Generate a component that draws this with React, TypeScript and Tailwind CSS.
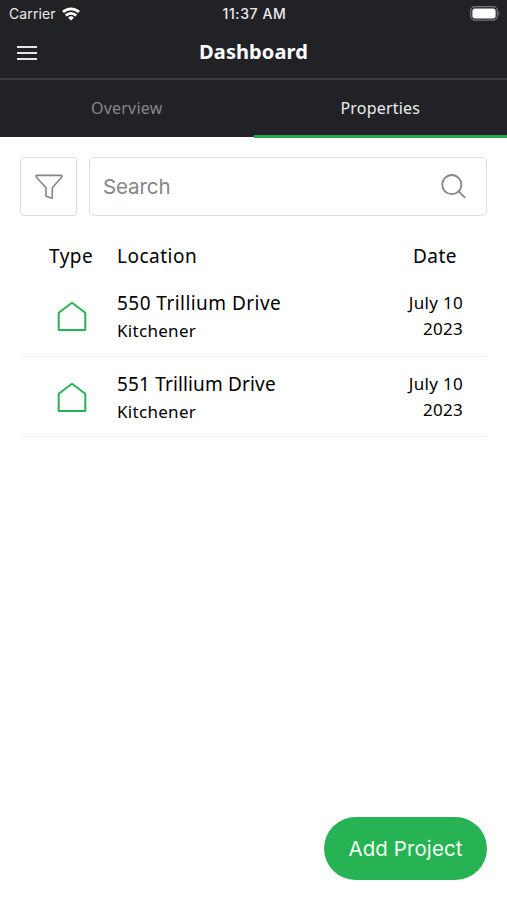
interface Property {
  id: number
  address: string
  city: string
  day: string
  year: string
}

const properties: Property[] = [
  { id: 1, address: '550 Trillium Drive', city: 'Kitchener', day: 'July 10', year: '2023' },
  { id: 2, address: '551 Trillium Drive', city: 'Kitchener', day: 'July 10', year: '2023' },
]

function StatusBar() {
  return (
    <div className="grid h-[27px] grid-cols-3 items-center pl-[9px] pr-[7px] font-[Inter,sans-serif] leading-none text-[#ececec]">
      <div className="flex items-center gap-[6px]">
        <span className="text-[14px] tracking-[0.1px]">Carrier</span>
        <svg width="18" height="14" viewBox="0 0 18 14" fill="none" stroke="#fff" strokeWidth="2.8">
          <path d="M1 5a11.6 11.6 0 0 1 16 0" />
          <path d="M3.8 8.6a7.4 7.4 0 0 1 10.4 0" />
          <path d="M9 13.6 6.1 10.7a4.2 4.2 0 0 1 5.8 0Z" fill="#fff" stroke="none" />
        </svg>
      </div>
      <span className="mt-px whitespace-nowrap text-center text-[14px] font-medium tracking-[0.6px]">11:37 AM</span>
      <div className="flex justify-end">
        <svg width="30" height="15" viewBox="0 0 30 15" fill="none">
          <rect x="0.7" y="0.7" width="26.6" height="13.4" rx="4" stroke="#77787b" strokeWidth="1.2" />
          <rect x="2.4" y="2.4" width="23.2" height="10" rx="2.5" fill="#fff" />
          <path d="M28.4 5.2c1.6.7 1.6 3.9 0 4.6Z" fill="#77787b" />
        </svg>
      </div>
    </div>
  )
}

function HouseIcon() {
  return (
    <svg width="30" height="31" viewBox="0 0 30 31" fill="none" stroke="#27b355" strokeWidth="2" strokeLinejoin="round">
      <path d="M15 1.8 28.3 11.8V29H1.7V11.8Z" />
    </svg>
  )
}

function PropertyRow({ property }: { property: Property }) {
  return (
    <div className="group flex h-[80px] border-b border-[#f0f0f0] last:pt-px">
      <div className="w-[97px] pl-[37px] pt-[24px]">
        <HouseIcon />
      </div>
      <div className="flex-1">
        <p className="mt-[13px] text-[19px] leading-[26px] tracking-[0.45px] group-last:tracking-[0.15px]">{property.address}</p>
        <p className="mt-[2px] text-[17px] leading-[26px] tracking-[0.3px]">{property.city}</p>
      </div>
      <div className="pr-[24px] pt-[13px] text-right text-[17px] leading-[26px] tracking-[0.3px]">
        <p>{property.day}</p>
        <p>{property.year}</p>
      </div>
    </div>
  )
}

export default function App() {
  return (
    <div className="flex h-[900px] w-[507px] flex-col overflow-hidden bg-white font-['Noto_Sans',sans-serif] text-black">
      <header className="h-[137px] bg-[#212226]">
        <StatusBar />
        <div className="grid h-[53px] grid-cols-[1fr_auto_1fr] items-start border-b-2 border-[#3d3e42] pt-[11px]">
          <button className="ml-[17px] mt-[8px] flex w-[20px] flex-col gap-[4px]" aria-label="Menu">
            <span className="h-[2px] w-full bg-[#e4e4e4]" />
            <span className="h-[2px] w-full bg-[#e4e4e4]" />
            <span className="h-[2px] w-full bg-[#e4e4e4]" />
          </button>
          <h1 className="text-[20px] font-bold leading-[28px] tracking-[0.1px] text-white">Dashboard</h1>
        </div>
        <nav className="grid h-[57px] grid-cols-2 text-center text-[16px] leading-[56px] tracking-[0.2px]">
          <span className="text-[#85868a]">Overview</span>
          <span className="h-[58px] border-b-[3px] border-[#27a64f] text-[#ededee]">Properties</span>
        </nav>
      </header>

      <main className="flex-1 px-[20px] pt-[20px]">
        <div className="flex h-[59px] gap-[12px]">
          <button className="flex w-[57px] items-center justify-center rounded-[3px] border-[1.5px] border-[#dfdfdf]" aria-label="Filter">
            <svg width="28" height="26" viewBox="0 0 28 26" fill="none" stroke="#858585" strokeWidth="1.6" strokeLinejoin="round">
              <path d="M1.2 1.4H26.8V3L17.3 13.8V24.2L11 22.2V13.8L1.2 3Z" />
            </svg>
          </button>
          <div className="flex flex-1 items-center justify-between rounded-[6px] border-[1.5px] border-[#dfdfdf] pl-[13px] pr-[20px]">
            <span className="pt-[2px] font-[Inter,sans-serif] text-[20.5px] tracking-[-0.1px] text-[#858585]">Search</span>
            <svg width="25" height="25" viewBox="0 0 25 25" fill="none" stroke="#858585" strokeWidth="1.8">
              <circle cx="10.8" cy="10.6" r="9.6" />
              <path d="m17.6 17.4 6.6 6.4" />
            </svg>
          </div>
        </div>

        <div className="flex h-[61px] pt-[26px] text-[19px] leading-[28px] tracking-[0.5px]">
          <span className="w-[97px] pl-[29px]">Type</span>
          <span className="flex-1">Location</span>
          <span className="pr-[30px]">Date</span>
        </div>

        {properties.map((property) => (
          <PropertyRow key={property.id} property={property} />
        ))}
      </main>

      <footer className="flex justify-end pb-[20px] pr-[20px]">
        <button className="h-[63px] w-[163px] rounded-full bg-[#27b353] pt-[2px] font-[Inter,sans-serif] text-[20.5px] tracking-[0.1px] text-[#f0fff4]">
          Add Project
        </button>
      </footer>
    </div>
  )
}
